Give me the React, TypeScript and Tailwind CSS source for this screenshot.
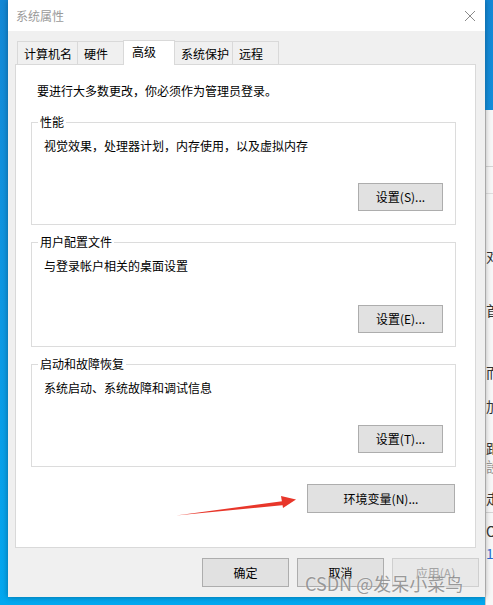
const font = { fontFamily: '"Noto Sans CJK SC", "Liberation Sans", sans-serif' }

function Btn(props: { label: string; w?: string; disabled?: boolean; className?: string }) {
  return (
    <div
      className={`flex items-center justify-center border text-[12px] leading-4 ${props.w ?? 'w-[85px]'} ${
        props.disabled ? 'bg-[#e8e8e8] border-[#cfcfcf] text-[#a3a3a3]' : 'bg-[#e1e1e1] border-[#adadad] text-black'
      } ${props.className ?? ''}`}
    >
      {props.label}
    </div>
  )
}

function Group(props: { title: string; desc: string; btn: string; h: string; className?: string }) {
  return (
    <div className={`relative ml-[15px] w-[425px] ${props.h} border border-[#dcdcdc] flex flex-col ${props.className ?? ''}`}>
      <div className="absolute -top-[9px] left-[6px] bg-white px-[2px] text-[12px] leading-4 text-black">{props.title}</div>
      <div className="pt-[15px] pl-[12px] text-[12px] leading-4 text-black">{props.desc}</div>
      <Btn label={props.btn} className="mt-auto mb-[13px] mr-[12px] self-end h-[28px]" />
    </div>
  )
}

const tabs = ['计算机名', '硬件', '高级', '系统保护', '远程']
const tabW = ['w-[61px]', 'w-[47px]', 'w-[52px]', 'w-[59px]', 'w-[47px]']

export default function App() {
  return (
    <div className="relative w-[493px] h-[605px] overflow-hidden flex bg-gradient-to-b from-[#1488d6] to-[#03a8f0]" style={font}>
      <div className="ml-2 w-[477px] h-[597px] flex flex-col bg-[#f0f0f0] shadow-[0_0_6px_rgba(0,0,0,0.35)] z-10">
        <div className="h-[31px] bg-white flex items-center justify-between pl-2 pr-[9px]">
          <span className="text-[12px] leading-4 text-[#9a9a9a]">系统属性</span>
          <svg width="12" height="12" viewBox="0 0 12 12">
            <path d="M1 1 L11 11 M11 1 L1 11" stroke="#8a8a8a" strokeWidth="1" />
          </svg>
        </div>

        <div className="mt-[9px] ml-[9px] flex items-end h-[24px] relative z-10">
          {tabs.map((t, i) =>
            i === 2 ? (
              <div key={t} className={`${tabW[i]} -ml-px h-[25px] -mb-px bg-white border border-b-0 border-[#d9d9d9] pl-[8px] pt-[3px] text-[12px] leading-4 text-black`}>
                {t}
              </div>
            ) : (
              <div key={t} className={`${tabW[i]} ${i === 0 ? '' : '-ml-px'} h-[23px] bg-[#f0f0f0] border border-b-0 border-[#d9d9d9] pl-[6px] pt-[4px] text-[12px] leading-4 text-black`}>
                {t}
              </div>
            )
          )}
        </div>

        <div className="ml-[7px] w-[461px] h-[484px] bg-white border border-[#d9d9d9] flex flex-col">
          <div className="pt-[18px] pl-[21px] text-[12px] leading-4 text-black">要进行大多数更改，你必须作为管理员登录。</div>
          <Group className="mt-[23px]" h="h-[103px]" title="性能" desc="视觉效果，处理器计划，内存使用，以及虚拟内存" btn="设置(S)..." />
          <Group className="mt-[17px]" h="h-[105px]" title="用户配置文件" desc="与登录帐户相关的桌面设置" btn="设置(E)..." />
          <Group className="mt-[17px]" h="h-[103px]" title="启动和故障恢复" desc="系统启动、系统故障和调试信息" btn="设置(T)..." />
          <Btn label="环境变量(N)..." w="w-[148px]" className="mt-[17px] mr-[20px] self-end h-[29px]" />
        </div>

        <div className="mt-[10px] flex justify-end gap-[8px] pr-[6px]">
          <Btn label="确定" w="w-[87px]" className="h-[29px]" />
          <Btn label="取消" w="w-[87px]" className="h-[29px]" />
          <Btn label="应用(A)" w="w-[87px]" className="h-[29px]" disabled />
        </div>
      </div>

      <div className="flex-1 mt-[110px] h-[495px] bg-[#f7f7f7] border-l border-[#c8c8c8] flex flex-col text-[14px] leading-4 overflow-hidden">
        <div className="mt-[56px] h-px bg-[#d4d4d4]" />
        <div className="mt-[26px] h-px bg-[#dedede]" />
        <div className="mt-[54px] text-[#333]">对</div>
        <div className="mt-[38px] text-[#333]">首</div>
        <div className="mt-[46px] text-[#333]">而</div>
        <div className="mt-[18px] text-[#333]">加</div>
        <div className="mt-[26px] text-[#333]">距</div>
        <div className="mt-[2px] text-[#999]">設</div>
        <div className="mt-[16px] text-[#333]">走</div>
        <div className="mt-[6px] h-px bg-[#d4d4d4]" />
        <div className="mt-[10px] text-[#333]">O</div>
        <div className="mt-[6px] text-[#2b6cd1]">1</div>
      </div>

      <svg className="absolute left-0 top-0 z-20 pointer-events-none" width="493" height="605" viewBox="0 0 493 605">
        <path d="M176 515.5 L284 501 L284.5 505 Z" fill="#e8362a" />
        <path d="M281 496 L296 499.5 L283 508 Z" fill="#e8362a" />
      </svg>

      <div className="absolute left-[305px] top-[572px] z-20 text-[18px] leading-[22px] text-[#8c8c8c] opacity-85 [text-shadow:0_0_2px_#ffffff]">
        CSDN @发呆小菜鸟
      </div>
    </div>
  )
}
